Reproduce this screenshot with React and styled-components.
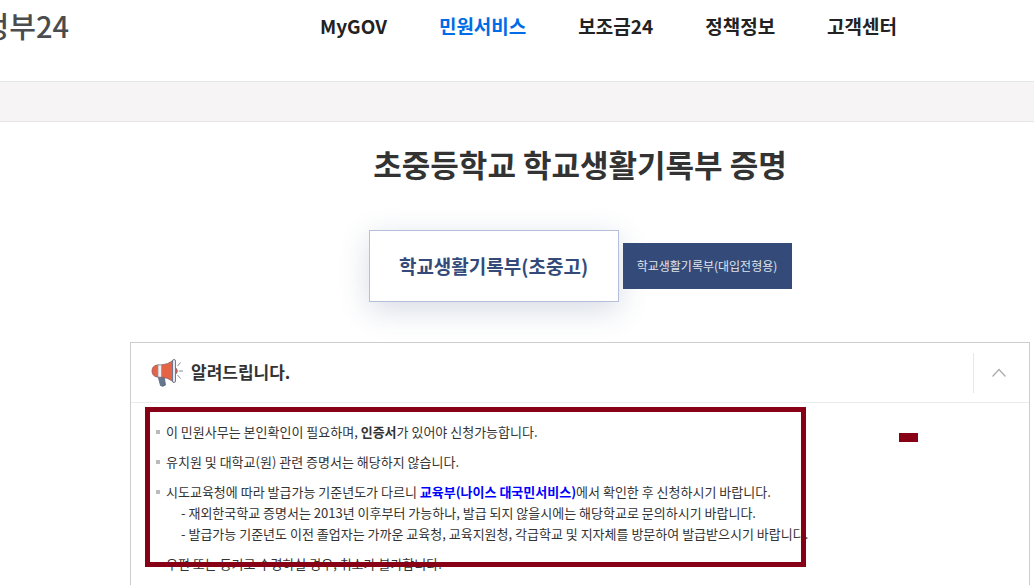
import React from "react";
import styled, { createGlobalStyle } from "styled-components";

const GlobalStyle = createGlobalStyle`
  *, *::before, *::after { box-sizing: border-box; }
  html { scrollbar-width: none; }
  body {
    margin: 0;
    background: #fff;
    color: #333;
    font-family: "Noto Sans CJK KR", "Noto Sans", sans-serif;
    font-size: 13px;
    line-height: 21px;
  }
  h1, h2, p, ul { margin: 0; padding: 0; }
  ul { list-style: none; }
  button { font-family: inherit; cursor: pointer; }
  a { text-decoration: none; }
`;

const Page = styled.div`
  overflow: hidden;
`;

const Header = styled.header`
  display: flex;
  align-items: flex-start;
  height: 82px;
  border-bottom: 1px solid #e2e6e6;
`;

const Logo = styled.a`
  flex: none;
  display: flex;
  justify-content: flex-end;
  width: 69px;
  overflow: hidden;
  white-space: nowrap;
  color: #4a4c4e;
  font-size: 29px;
  font-weight: 500;
  line-height: 50px;
`;

const Nav = styled.nav`
  display: flex;
  gap: 52px;
  margin-left: 251px;
`;

const NavLink = styled.a`
  color: ${({ $active }) => ($active ? "#006be6" : "#222")};
  font-size: 19px;
  font-weight: 700;
  line-height: 52px;
  white-space: nowrap;
`;

const LocationBar = styled.div`
  height: 40px;
  background: #f6f4f5;
  border-bottom: 1px solid #e8e6e7;
`;

const Main = styled.main`
  padding: 18px 4px 0 130px;
`;

const Title = styled.h1`
  color: #333;
  font-size: 31px;
  font-weight: 700;
  line-height: 48px;
  text-align: center;
`;

const Tabs = styled.div`
  display: flex;
  align-items: center;
  justify-content: center;
  gap: 4px;
  margin: 42px 0 40px;
`;

const Tab = styled.button`
  padding: 0 0 2px;
  width: ${({ $active }) => ($active ? "250px" : "169px")};
  height: ${({ $active }) => ($active ? "72px" : "46px")};
  border: 1px solid ${({ $active }) => ($active ? "#b5bfdb" : "#344b79")};
  background: ${({ $active }) => ($active ? "#fff" : "#344b79")};
  color: ${({ $active }) => ($active ? "#344b79" : "#e0e4eb")};
  box-shadow: ${({ $active }) => ($active ? "0 8px 30px rgba(52, 75, 121, 0.2)" : "none")};
  font-size: ${({ $active }) => ($active ? "19px" : "12px")};
  font-weight: ${({ $active }) => ($active ? 700 : 400)};
  white-space: nowrap;
`;

const Panel = styled.section`
  border: 1px solid #ccc;
  background: #fff;
`;

const PanelHeader = styled.div`
  display: flex;
  align-items: center;
  height: 60px;
  padding-left: 20px;
  border-bottom: 1px solid #ececec;
`;

const PanelTitle = styled.h2`
  flex: 1;
  margin-left: 8px;
  padding-bottom: 2px;
  font-size: 17px;
  font-weight: 700;
  line-height: 28px;
`;

const Toggle = styled.button`
  display: flex;
  align-items: center;
  justify-content: center;
  width: 56px;
  height: 40px;
  padding: 0 5px 0 0;
  border: 0;
  border-left: 1px solid #e8e8e8;
  background: none;
`;

const PanelBody = styled.div`
  position: relative;
  padding: 18px 24px 20px;
`;

const NoticeList = styled.ul`
  display: flex;
  flex-direction: column;
  gap: 9px;
`;

const Notice = styled.li`
  display: flex;
  gap: 6px;
  &::before {
    content: "";
    flex: none;
    width: 4px;
    height: 4px;
    margin: 9px 0 0 1px;
    background: #bbb;
  }
`;

const SubNotice = styled.li`
  padding-left: 15px;
`;

const ServiceLink = styled.a`
  color: #00f;
  font-weight: 700;
`;

const Highlight = styled.div`
  position: absolute;
  top: 4px;
  left: 14px;
  width: 661px;
  height: 160px;
  border: 5px solid #880015;
  pointer-events: none;
`;

const Mark = styled.div`
  position: absolute;
  top: 30px;
  left: 768px;
  width: 19px;
  height: 9px;
  background: #880015;
`;

const MENU = ["MyGOV", "민원서비스", "보조금24", "정책정보", "고객센터"];

function Megaphone() {
  return (
    <svg width="32" height="28" viewBox="0 0 32 28" aria-hidden="true">
      <path d="M7 17h6l1.500 9q-2.500 2.200-5 .5z" fill="#66788f" stroke="#556378" strokeWidth=".8" />
      <path d="M10 6v12H6Q1 17 1 12t5-6z" fill="#e46445" stroke="#8b5a5c" strokeWidth=".8" />
      <path d="M10 6q7-.5 12-4.500v21q-5-4-12-4.500z" fill="#e46445" stroke="#8b5a5c" strokeWidth=".8" />
      <path d="M7 6h3.500v12H7z" fill="#eef0f5" stroke="#8f95a8" strokeWidth=".7" />
      <rect x="21.500" y=".5" width="3" height="23" rx="1.500" fill="#e5e8f0" stroke="#666c86" strokeWidth=".9" />
      <path d="M25 9q3 3 0 6" fill="#e46445" stroke="#666c86" strokeWidth=".8" />
      <path d="m26.500 7 3-3.500M28 12h4M26.500 16l3 3.500" fill="none" stroke="#8187a0" />
    </svg>
  );
}

export default function App() {
  return (
    <>
      <GlobalStyle />
      <Page>
        <Header>
          <Logo href="#">정부24</Logo>
          <Nav>
            {MENU.map((label) => (
              <NavLink key={label} href="#" $active={label === "민원서비스"}>
                {label}
              </NavLink>
            ))}
          </Nav>
        </Header>
        <LocationBar />
        <Main>
          <Title>초중등학교 학교생활기록부 증명</Title>
          <Tabs>
            <Tab type="button" $active>학교생활기록부(초중고)</Tab>
            <Tab type="button">학교생활기록부(대입전형용)</Tab>
          </Tabs>
          <Panel>
            <PanelHeader>
              <Megaphone />
              <PanelTitle>알려드립니다.</PanelTitle>
              <Toggle type="button" aria-label="접기" aria-expanded="true">
                <svg width="16" height="10" viewBox="0 0 16 10" aria-hidden="true">
                  <path d="m1.500 8.500 6.500-7 6.500 7" fill="none" stroke="#aaa" strokeWidth="1.200" />
                </svg>
              </Toggle>
            </PanelHeader>
            <PanelBody>
              <NoticeList>
                <Notice>
                  <p>이 민원사무는 본인확인이 필요하며, <b>인증서</b>가 있어야 신청가능합니다.</p>
                </Notice>
                <Notice>
                  <p>유치원 및 대학교(원) 관련 증명서는 해당하지 않습니다.</p>
                </Notice>
                <Notice>
                  <div>
                    <p>
                      시도교육청에 따라 발급가능 기준년도가 다르니{" "}
                      <ServiceLink href="#">교육부(나이스 대국민서비스)</ServiceLink>에서 확인한 후 신청하시기 바랍니다.
                    </p>
                    <ul>
                      <SubNotice>- 재외한국학교 증명서는 2013년 이후부터 가능하나, 발급 되지 않을시에는 해당학교로 문의하시기 바랍니다.</SubNotice>
                      <SubNotice>- 발급가능 기준년도 이전 졸업자는 가까운 교육청, 교육지원청, 각급학교 및 지자체를 방문하여 발급받으시기 바랍니다.</SubNotice>
                    </ul>
                  </div>
                </Notice>
                <Notice>
                  <p>우편 또는 등기로 수령하실 경우, 취소가 불가합니다.</p>
                </Notice>
              </NoticeList>
              <Highlight />
              <Mark />
            </PanelBody>
          </Panel>
        </Main>
      </Page>
    </>
  );
}
